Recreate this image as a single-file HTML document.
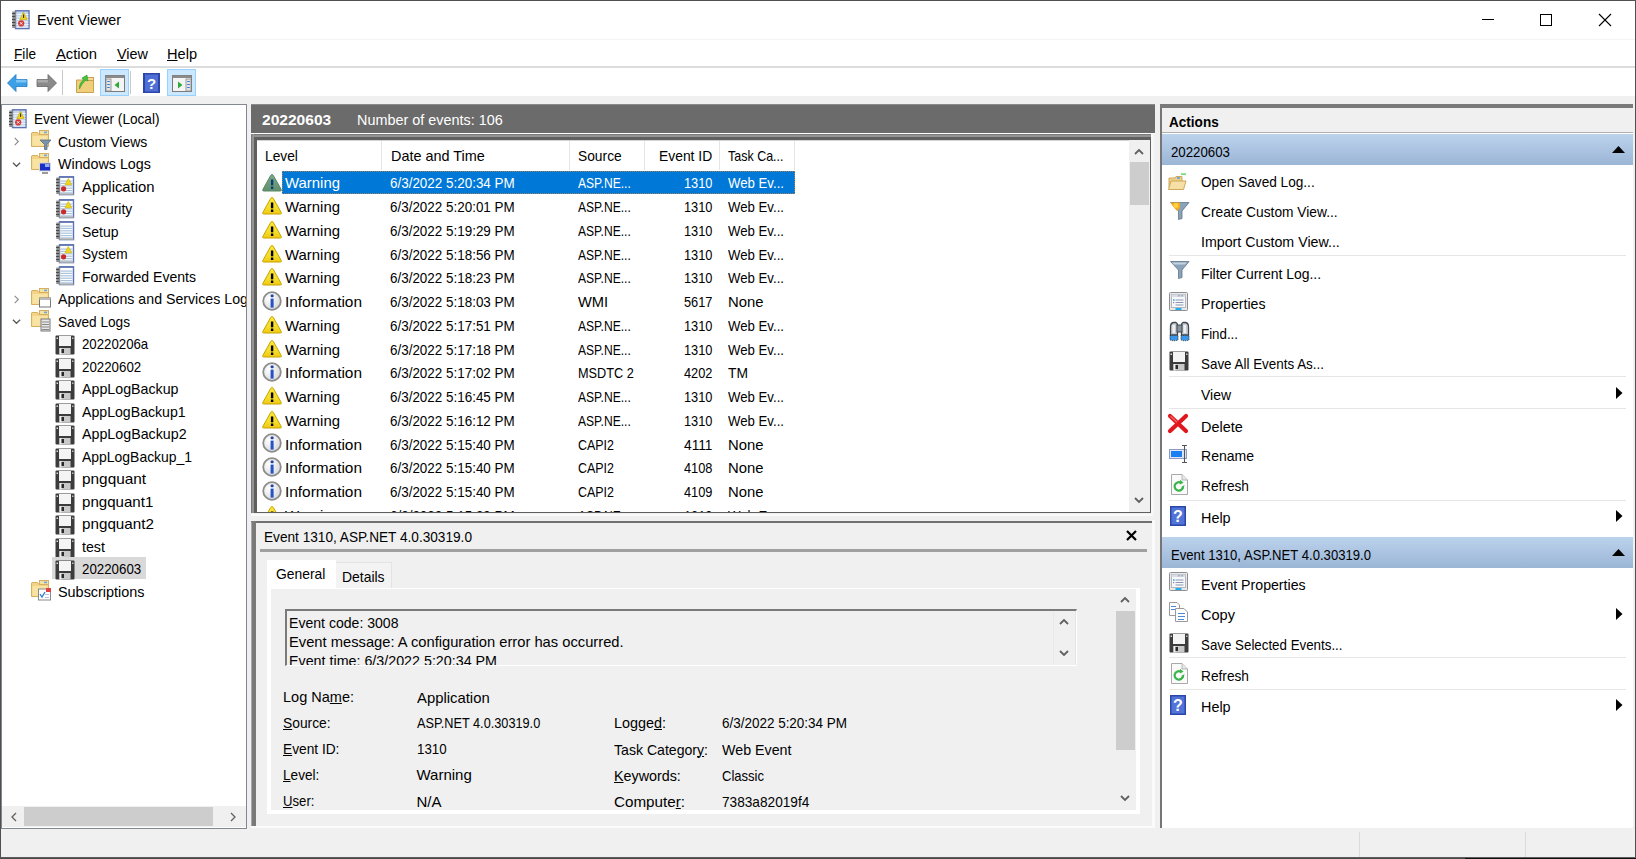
<!DOCTYPE html>
<html><head><meta charset="utf-8">
<style>
*{box-sizing:border-box;margin:0;padding:0}
html,body{width:1636px;height:859px;overflow:hidden;background:#f0f0f0;font-family:"Liberation Sans",sans-serif;font-size:14px;color:#000}
.a{position:absolute}
.t{position:absolute;white-space:nowrap}
u{text-decoration-thickness:1px;text-underline-offset:1px}
svg{overflow:visible}
</style></head><body>
<div class="a" style="left:0px;top:0px;width:1636px;height:859px;background:#f0f0f0;"></div>
<div class="a" style="left:0px;top:0px;width:1636px;height:96px;background:#ffffff;"></div>
<div class="a" style="left:0px;top:39px;width:1636px;height:1px;background:#f4f4f4;"></div>
<div class="a" style="left:0px;top:66px;width:1636px;height:2px;background:#dcdcdc;"></div>
<div class="a" style="left:0px;top:0px;width:1636px;height:1px;background:#505050;"></div>
<div class="a" style="left:0px;top:0px;width:1px;height:859px;background:#505050;"></div>
<div class="a" style="left:1635px;top:0px;width:1px;height:859px;background:#505050;"></div>
<div class="a" style="left:0px;top:857px;width:1636px;height:1px;background:#5c5c5c;"></div>
<div class="a" style="left:0px;top:858px;width:1465px;height:1px;background:#4a4a4a;"></div>
<div class="a" style="left:1465px;top:858px;width:171px;height:1px;background:#101010;"></div>
<div class="a" style="left:1359px;top:832px;width:1px;height:25px;background:#dadada;"></div>
<div class="a" style="left:1525px;top:832px;width:1px;height:25px;background:#dadada;"></div>
<div class="a" style="left:1160px;top:827px;width:474px;height:1px;background:#dcdcdc;"></div>
<svg class="a" style="left:12px;top:10px" width="18" height="19" viewBox="0 0 18 19"><rect x="3.5" y="0.8" width="13.5" height="17.8" fill="#c8d8ec" stroke="#5d72b4" stroke-width="1.4"/><rect x="4.5" y="4" width="12" height="1" fill="#eef4fb"/><rect x="4.5" y="6.5" width="12" height="1" fill="#eef4fb"/><rect x="4.5" y="9" width="12" height="1" fill="#eef4fb"/><rect x="4.5" y="11.5" width="12" height="1" fill="#eef4fb"/><rect x="4.5" y="14" width="12" height="1" fill="#eef4fb"/><rect x="4.5" y="16.5" width="12" height="1" fill="#eef4fb"/><rect x="0.3" y="1.5" width="3.6" height="16.5" fill="#8d8d8d"/><rect x="0" y="3" width="3.2" height="1" fill="#4a4a4a"/><rect x="0" y="6" width="3.2" height="1" fill="#4a4a4a"/><rect x="0" y="9" width="3.2" height="1" fill="#4a4a4a"/><rect x="0" y="12" width="3.2" height="1" fill="#4a4a4a"/><rect x="0" y="15" width="3.2" height="1" fill="#4a4a4a"/><path d="M11.5 2.2 L15.2 9.6 L7.8 9.6Z" fill="#f1d61c" stroke="#c9a800" stroke-width="0.7"/><rect x="11" y="4.5" width="1.1" height="3.5" fill="#333"/><circle cx="9.2" cy="13.4" r="3.1" fill="#d33a3a"/><path d="M8 12.2 L10.4 14.6 M10.4 12.2 L8 14.6" stroke="#fff" stroke-width="0.9"/></svg>
<div class="t" style="top:11.40px;font-size:15px;line-height:18px;color:#000;transform:scaleX(0.9534);transform-origin:0 0;left:37.00px;">Event Viewer</div>
<svg class="a" style="left:1482px;top:19px" width="12" height="1" viewBox="0 0 12 1"><rect x="0" y="0" width="12" height="1" fill="#000"/></svg>
<svg class="a" style="left:1540px;top:14px" width="12" height="12" viewBox="0 0 12 12"><rect x="0.5" y="0.5" width="11" height="11" fill="none" stroke="#000" stroke-width="1"/></svg>
<svg class="a" style="left:1599px;top:14px" width="12" height="12" viewBox="0 0 12 12"><path d="M0 0 L12 12 M12 0 L0 12" stroke="#000" stroke-width="1.1"/></svg>
<div class="t" style="top:44.60px;font-size:15px;line-height:18px;color:#000;transform:scaleX(0.9101);transform-origin:0 0;left:14.00px;"><u>F</u>ile</div>
<div class="t" style="top:44.60px;font-size:15px;line-height:18px;color:#000;transform:scaleX(0.9831);transform-origin:0 0;left:56.00px;"><u>A</u>ction</div>
<div class="t" style="top:44.60px;font-size:15px;line-height:18px;color:#000;transform:scaleX(0.9612);transform-origin:0 0;left:117.00px;"><u>V</u>iew</div>
<div class="t" style="top:44.60px;font-size:15px;line-height:18px;color:#000;transform:scaleX(0.9722);transform-origin:0 0;left:167.00px;"><u>H</u>elp</div>
<svg class="a" style="left:7px;top:73px" width="21" height="20" viewBox="0 0 21 20"><path d="M0.5 10 L9 1.5 L9 6.5 L20 6.5 L20 13.5 L9 13.5 L9 18.5Z" fill="#3d9fe6" stroke="#1f78c4" stroke-width="0.8"/><path d="M9 6.8 L19.5 6.8 L19.5 9.5 L9 9.5Z" fill="#7cc4f4"/></svg>
<svg class="a" style="left:36px;top:73px" width="21" height="20" viewBox="0 0 21 20"><path d="M20.5 10 L12 1.5 L12 6.5 L1 6.5 L1 13.5 L12 13.5 L12 18.5Z" fill="#8a8a8a" stroke="#666" stroke-width="0.8"/><path d="M1.5 6.8 L12 6.8 L12 9.5 L1.5 9.5Z" fill="#aaa"/></svg>
<div class="a" style="left:62px;top:70px;width:1px;height:25px;background:#c8c8c8;"></div>
<svg class="a" style="left:76px;top:74px" width="18" height="19" viewBox="0 0 18 19"><path d="M0.5 6 L0.5 18.5 L17.5 18.5 L17.5 6Z" fill="#f0cf7c" stroke="#c9a24e" stroke-width="1"/><rect x="8" y="3.5" width="9.5" height="3" fill="#f5dc9a" stroke="#c9a24e" stroke-width="1"/><path d="M3.5 15 Q3 9 7.5 6 L6 4 L11 1 L12 7 L10 6 Q6 9 3.5 15Z" fill="#46c040" stroke="#2f9a2f" stroke-width="0.6"/></svg>
<div class="a" style="left:100px;top:69px;width:29px;height:27px;background:#cce8ff;box-shadow:inset 0 0 0 1px #99d1ff"></div>
<svg class="a" style="left:105px;top:75px" width="20" height="17" viewBox="0 0 20 17"><rect x="0.5" y="0.5" width="19" height="16" fill="#f4f4f4" stroke="#7a7a7a" stroke-width="1"/><rect x="0.5" y="0.5" width="19" height="2.5" fill="#8a8a8a"/><rect x="1" y="4" width="5" height="12" fill="#e4e4e4" stroke="#8a8a8a" stroke-width="0.8"/><rect x="2.2" y="6" width="2.6" height="1" fill="#3a7bd5"/><rect x="2.2" y="9" width="2.6" height="1" fill="#3a7bd5"/><rect x="2.2" y="12" width="2.6" height="1" fill="#3a7bd5"/><path d="M14 6.5 L9.5 10 L14 13.5Z" fill="#2eaa3a"/></svg>
<div class="a" style="left:130px;top:71px;width:1px;height:23px;background:#c8c8c8;"></div>
<svg class="a" style="left:143px;top:73px" width="17" height="20" viewBox="0 0 17 20"><rect x="0" y="0" width="17" height="20" fill="#2b46a8"/><rect x="2" y="1.5" width="13" height="17" fill="#4f6fd6"/><text x="8.5" y="15.5" font-family="Liberation Sans" font-size="15" font-weight="bold" fill="#fff" text-anchor="middle">?</text></svg>
<div class="a" style="left:167px;top:69px;width:29px;height:27px;background:#cce8ff;box-shadow:inset 0 0 0 1px #99d1ff"></div>
<svg class="a" style="left:172px;top:75px" width="20" height="17" viewBox="0 0 20 17"><rect x="0.5" y="0.5" width="19" height="16" fill="#f4f4f4" stroke="#7a7a7a" stroke-width="1"/><rect x="0.5" y="0.5" width="19" height="2.5" fill="#8a8a8a"/><rect x="14" y="4" width="5" height="12" fill="#e4e4e4" stroke="#8a8a8a" stroke-width="0.8"/><rect x="15.2" y="6" width="2.6" height="1" fill="#3a7bd5"/><rect x="15.2" y="9" width="2.6" height="1" fill="#3a7bd5"/><rect x="15.2" y="12" width="2.6" height="1" fill="#3a7bd5"/><path d="M6 6.5 L10.5 10 L6 13.5Z" fill="#2eaa3a"/></svg>
<div class="a" style="left:1px;top:104px;width:246px;height:725px;background:#ffffff;border:1px solid #828790"></div>
<svg class="a" style="left:9px;top:109px" width="18" height="19" viewBox="0 0 18 19"><rect x="3.5" y="0.8" width="13.5" height="17.8" fill="#c8d8ec" stroke="#5d72b4" stroke-width="1.4"/><rect x="4.5" y="4" width="12" height="1" fill="#eef4fb"/><rect x="4.5" y="6.5" width="12" height="1" fill="#eef4fb"/><rect x="4.5" y="9" width="12" height="1" fill="#eef4fb"/><rect x="4.5" y="11.5" width="12" height="1" fill="#eef4fb"/><rect x="4.5" y="14" width="12" height="1" fill="#eef4fb"/><rect x="4.5" y="16.5" width="12" height="1" fill="#eef4fb"/><rect x="0.3" y="1.5" width="3.6" height="16.5" fill="#8d8d8d"/><rect x="0" y="3" width="3.2" height="1" fill="#4a4a4a"/><rect x="0" y="6" width="3.2" height="1" fill="#4a4a4a"/><rect x="0" y="9" width="3.2" height="1" fill="#4a4a4a"/><rect x="0" y="12" width="3.2" height="1" fill="#4a4a4a"/><rect x="0" y="15" width="3.2" height="1" fill="#4a4a4a"/><path d="M11.5 2.2 L15.2 9.6 L7.8 9.6Z" fill="#f1d61c" stroke="#c9a800" stroke-width="0.7"/><rect x="11" y="4.5" width="1.1" height="3.5" fill="#333"/><circle cx="9.2" cy="13.4" r="3.1" fill="#d33a3a"/><path d="M8 12.2 L10.4 14.6 M10.4 12.2 L8 14.6" stroke="#fff" stroke-width="0.9"/></svg>
<div class="t" style="top:110.30px;font-size:15px;line-height:18px;color:#000;transform:scaleX(0.9086);transform-origin:0 0;left:34.00px;">Event Viewer (Local)</div>
<svg class="a" style="left:31px;top:130px" width="21" height="22" viewBox="0 0 21 22"><path d="M0.5 3 L0.5 16.5 L17.5 16.5 L17.5 4.5 L8 4.5 L6.5 2.5 L1 2.5Z" fill="#f3d486" stroke="#d4b062" stroke-width="1"/><rect x="8.5" y="0.5" width="9" height="4" fill="#f7e2a4" stroke="#d4b062" stroke-width="1"/><rect x="13" y="1.6" width="3" height="1.6" fill="#6aa9e0"/><rect x="1.5" y="6" width="15" height="9.8" fill="#f9e3a2"/><path d="M9 10 L20 10 L16 14.5 L16 19.5 L13.5 19.5 L13.5 14.5Z" fill="#7b93a8" stroke="#566f85" stroke-width="0.8"/></svg>
<svg class="a" style="left:12px;top:137px" width="9" height="9" viewBox="0 0 9 9"><path d="M2.6999999999999997 0.9 L6.3 4.5 L2.6999999999999997 8.1" fill="none" stroke="#8a8a8a" stroke-width="1.1"/></svg>
<div class="t" style="top:132.80px;font-size:15px;line-height:18px;color:#000;transform:scaleX(0.9342);transform-origin:0 0;left:57.50px;">Custom Views</div>
<svg class="a" style="left:31px;top:153px" width="21" height="22" viewBox="0 0 21 22"><path d="M0.5 3 L0.5 16.5 L17.5 16.5 L17.5 4.5 L8 4.5 L6.5 2.5 L1 2.5Z" fill="#f3d486" stroke="#d4b062" stroke-width="1"/><rect x="8.5" y="0.5" width="9" height="4" fill="#f7e2a4" stroke="#d4b062" stroke-width="1"/><rect x="13" y="1.6" width="3" height="1.6" fill="#6aa9e0"/><rect x="1.5" y="6" width="15" height="9.8" fill="#f9e3a2"/><rect x="8" y="9.5" width="12" height="9" fill="#d8d8d8"/><rect x="9" y="10.5" width="10" height="7" fill="#1a2fc8"/><rect x="14" y="11" width="4.5" height="3" fill="#8fb0ee"/><rect x="11" y="19" width="6" height="2" fill="#9a9a9a"/></svg>
<svg class="a" style="left:12px;top:160px" width="9" height="9" viewBox="0 0 9 9"><path d="M0.9 2.6999999999999997 L4.5 6.3 L8.1 2.6999999999999997" fill="none" stroke="#5a5a5a" stroke-width="1.3"/></svg>
<div class="t" style="top:155.30px;font-size:15px;line-height:18px;color:#000;transform:scaleX(0.9524);transform-origin:0 0;left:57.50px;">Windows Logs</div>
<svg class="a" style="left:56px;top:176px" width="18" height="19" viewBox="0 0 18 19"><rect x="3.5" y="0.8" width="14" height="17.8" fill="#fff" stroke="#5d72b4" stroke-width="1.4"/><rect x="3.5" y="0.2" width="14" height="1.6" fill="#6275b4"/><rect x="4.5" y="4.5" width="12" height="1.2" fill="#a9c3dc"/><rect x="4.5" y="6.8" width="12" height="1.2" fill="#a9c3dc"/><rect x="4.5" y="9.2" width="12" height="1.2" fill="#a9c3dc"/><rect x="4.5" y="11.6" width="12" height="1.2" fill="#a9c3dc"/><rect x="4.5" y="14" width="12" height="1.2" fill="#a9c3dc"/><rect x="4.5" y="16.3" width="12" height="1.2" fill="#a9c3dc"/><rect x="0.3" y="1.5" width="3.6" height="16.5" fill="#8d8d8d"/><rect x="0" y="3" width="3.2" height="1" fill="#4a4a4a"/><rect x="0" y="6" width="3.2" height="1" fill="#4a4a4a"/><rect x="0" y="9" width="3.2" height="1" fill="#4a4a4a"/><rect x="0" y="12" width="3.2" height="1" fill="#4a4a4a"/><rect x="0" y="15" width="3.2" height="1" fill="#4a4a4a"/><rect x="3.5" y="17.5" width="14" height="1.5" fill="#a8a8a8"/><path d="M12.3 2.5 L15.6 8.8 L9 8.8Z" fill="#f1d61c" stroke="#d7b800" stroke-width="0.7"/><circle cx="7.6" cy="12.8" r="2.6" fill="#cc2a2a"/></svg>
<div class="t" style="top:177.80px;font-size:15px;line-height:18px;color:#000;transform:scaleX(0.9879);transform-origin:0 0;left:81.50px;">Application</div>
<svg class="a" style="left:56px;top:199px" width="18" height="19" viewBox="0 0 18 19"><rect x="3.5" y="0.8" width="14" height="17.8" fill="#fff" stroke="#5d72b4" stroke-width="1.4"/><rect x="3.5" y="0.2" width="14" height="1.6" fill="#6275b4"/><rect x="4.5" y="4.5" width="12" height="1.2" fill="#a9c3dc"/><rect x="4.5" y="6.8" width="12" height="1.2" fill="#a9c3dc"/><rect x="4.5" y="9.2" width="12" height="1.2" fill="#a9c3dc"/><rect x="4.5" y="11.6" width="12" height="1.2" fill="#a9c3dc"/><rect x="4.5" y="14" width="12" height="1.2" fill="#a9c3dc"/><rect x="4.5" y="16.3" width="12" height="1.2" fill="#a9c3dc"/><rect x="0.3" y="1.5" width="3.6" height="16.5" fill="#8d8d8d"/><rect x="0" y="3" width="3.2" height="1" fill="#4a4a4a"/><rect x="0" y="6" width="3.2" height="1" fill="#4a4a4a"/><rect x="0" y="9" width="3.2" height="1" fill="#4a4a4a"/><rect x="0" y="12" width="3.2" height="1" fill="#4a4a4a"/><rect x="0" y="15" width="3.2" height="1" fill="#4a4a4a"/><rect x="3.5" y="17.5" width="14" height="1.5" fill="#a8a8a8"/><path d="M12.3 2.5 L15.6 8.8 L9 8.8Z" fill="#f1d61c" stroke="#d7b800" stroke-width="0.7"/><circle cx="7.6" cy="12.8" r="2.6" fill="#cc2a2a"/></svg>
<div class="t" style="top:200.30px;font-size:15px;line-height:18px;color:#000;transform:scaleX(0.9264);transform-origin:0 0;left:81.50px;">Security</div>
<svg class="a" style="left:56px;top:221px" width="18" height="19" viewBox="0 0 18 19"><rect x="3.5" y="0.8" width="14" height="17.8" fill="#fff" stroke="#5d72b4" stroke-width="1.4"/><rect x="3.5" y="0.2" width="14" height="1.6" fill="#6275b4"/><rect x="4.5" y="4.5" width="12" height="1.2" fill="#a9c3dc"/><rect x="4.5" y="6.8" width="12" height="1.2" fill="#a9c3dc"/><rect x="4.5" y="9.2" width="12" height="1.2" fill="#a9c3dc"/><rect x="4.5" y="11.6" width="12" height="1.2" fill="#a9c3dc"/><rect x="4.5" y="14" width="12" height="1.2" fill="#a9c3dc"/><rect x="4.5" y="16.3" width="12" height="1.2" fill="#a9c3dc"/><rect x="0.3" y="1.5" width="3.6" height="16.5" fill="#8d8d8d"/><rect x="0" y="3" width="3.2" height="1" fill="#4a4a4a"/><rect x="0" y="6" width="3.2" height="1" fill="#4a4a4a"/><rect x="0" y="9" width="3.2" height="1" fill="#4a4a4a"/><rect x="0" y="12" width="3.2" height="1" fill="#4a4a4a"/><rect x="0" y="15" width="3.2" height="1" fill="#4a4a4a"/><rect x="3.5" y="17.5" width="14" height="1.5" fill="#a8a8a8"/></svg>
<div class="t" style="top:222.80px;font-size:15px;line-height:18px;color:#000;transform:scaleX(0.9310);transform-origin:0 0;left:81.50px;">Setup</div>
<svg class="a" style="left:56px;top:244px" width="18" height="19" viewBox="0 0 18 19"><rect x="3.5" y="0.8" width="14" height="17.8" fill="#fff" stroke="#5d72b4" stroke-width="1.4"/><rect x="3.5" y="0.2" width="14" height="1.6" fill="#6275b4"/><rect x="4.5" y="4.5" width="12" height="1.2" fill="#a9c3dc"/><rect x="4.5" y="6.8" width="12" height="1.2" fill="#a9c3dc"/><rect x="4.5" y="9.2" width="12" height="1.2" fill="#a9c3dc"/><rect x="4.5" y="11.6" width="12" height="1.2" fill="#a9c3dc"/><rect x="4.5" y="14" width="12" height="1.2" fill="#a9c3dc"/><rect x="4.5" y="16.3" width="12" height="1.2" fill="#a9c3dc"/><rect x="0.3" y="1.5" width="3.6" height="16.5" fill="#8d8d8d"/><rect x="0" y="3" width="3.2" height="1" fill="#4a4a4a"/><rect x="0" y="6" width="3.2" height="1" fill="#4a4a4a"/><rect x="0" y="9" width="3.2" height="1" fill="#4a4a4a"/><rect x="0" y="12" width="3.2" height="1" fill="#4a4a4a"/><rect x="0" y="15" width="3.2" height="1" fill="#4a4a4a"/><rect x="3.5" y="17.5" width="14" height="1.5" fill="#a8a8a8"/><path d="M12.3 2.5 L15.6 8.8 L9 8.8Z" fill="#f1d61c" stroke="#d7b800" stroke-width="0.7"/><circle cx="7.6" cy="12.8" r="2.6" fill="#cc2a2a"/></svg>
<div class="t" style="top:245.30px;font-size:15px;line-height:18px;color:#000;transform:scaleX(0.9097);transform-origin:0 0;left:81.50px;">System</div>
<svg class="a" style="left:56px;top:266px" width="18" height="19" viewBox="0 0 18 19"><rect x="3.5" y="0.8" width="14" height="17.8" fill="#fff" stroke="#5d72b4" stroke-width="1.4"/><rect x="3.5" y="0.2" width="14" height="1.6" fill="#6275b4"/><rect x="4.5" y="4.5" width="12" height="1.2" fill="#a9c3dc"/><rect x="4.5" y="6.8" width="12" height="1.2" fill="#a9c3dc"/><rect x="4.5" y="9.2" width="12" height="1.2" fill="#a9c3dc"/><rect x="4.5" y="11.6" width="12" height="1.2" fill="#a9c3dc"/><rect x="4.5" y="14" width="12" height="1.2" fill="#a9c3dc"/><rect x="4.5" y="16.3" width="12" height="1.2" fill="#a9c3dc"/><rect x="0.3" y="1.5" width="3.6" height="16.5" fill="#8d8d8d"/><rect x="0" y="3" width="3.2" height="1" fill="#4a4a4a"/><rect x="0" y="6" width="3.2" height="1" fill="#4a4a4a"/><rect x="0" y="9" width="3.2" height="1" fill="#4a4a4a"/><rect x="0" y="12" width="3.2" height="1" fill="#4a4a4a"/><rect x="0" y="15" width="3.2" height="1" fill="#4a4a4a"/><rect x="3.5" y="17.5" width="14" height="1.5" fill="#a8a8a8"/></svg>
<div class="t" style="top:267.80px;font-size:15px;line-height:18px;color:#000;transform:scaleX(0.9365);transform-origin:0 0;left:81.50px;">Forwarded Events</div>
<svg class="a" style="left:31px;top:288px" width="21" height="22" viewBox="0 0 21 22"><path d="M0.5 3 L0.5 16.5 L17.5 16.5 L17.5 4.5 L8 4.5 L6.5 2.5 L1 2.5Z" fill="#f3d486" stroke="#d4b062" stroke-width="1"/><rect x="8.5" y="0.5" width="9" height="4" fill="#f7e2a4" stroke="#d4b062" stroke-width="1"/><rect x="13" y="1.6" width="3" height="1.6" fill="#6aa9e0"/><rect x="1.5" y="6" width="15" height="9.8" fill="#f9e3a2"/><rect x="8.5" y="10" width="11" height="9" fill="#fff" stroke="#777" stroke-width="1"/><rect x="8.5" y="10" width="11" height="2" fill="#bbb"/></svg>
<svg class="a" style="left:12px;top:295px" width="9" height="9" viewBox="0 0 9 9"><path d="M2.6999999999999997 0.9 L6.3 4.5 L2.6999999999999997 8.1" fill="none" stroke="#8a8a8a" stroke-width="1.1"/></svg>
<div class="t" style="top:290.30px;font-size:15px;line-height:18px;color:#000;transform:scaleX(0.9450);transform-origin:0 0;left:57.50px;">Applications and Services Logs</div>
<svg class="a" style="left:31px;top:310px" width="21" height="22" viewBox="0 0 21 22"><path d="M0.5 3 L0.5 16.5 L17.5 16.5 L17.5 4.5 L8 4.5 L6.5 2.5 L1 2.5Z" fill="#f3d486" stroke="#d4b062" stroke-width="1"/><rect x="8.5" y="0.5" width="9" height="4" fill="#f7e2a4" stroke="#d4b062" stroke-width="1"/><rect x="13" y="1.6" width="3" height="1.6" fill="#6aa9e0"/><rect x="1.5" y="6" width="15" height="9.8" fill="#f9e3a2"/><rect x="10" y="9" width="9" height="12" fill="#e8e8e8" stroke="#777" stroke-width="1"/><rect x="11" y="11.5" width="7" height="1" fill="#888"/><rect x="11" y="14" width="7" height="1" fill="#888"/><rect x="11" y="16.5" width="7" height="1" fill="#888"/><rect x="11" y="19" width="7" height="1" fill="#888"/></svg>
<svg class="a" style="left:12px;top:317px" width="9" height="9" viewBox="0 0 9 9"><path d="M0.9 2.6999999999999997 L4.5 6.3 L8.1 2.6999999999999997" fill="none" stroke="#5a5a5a" stroke-width="1.3"/></svg>
<div class="t" style="top:312.80px;font-size:15px;line-height:18px;color:#000;transform:scaleX(0.9087);transform-origin:0 0;left:57.50px;">Saved Logs</div>
<svg class="a" style="left:55px;top:335px" width="20" height="20" viewBox="0 0 20 20"><path d="M0.5 1.5 Q0.5 0.5 1.5 0.5 L18.5 0.5 Q19.5 0.5 19.5 1.5 L19.5 18.5 Q19.5 19.5 18.5 19.5 L1.5 19.5 Q0.5 19.5 0.5 18.5Z" fill="#3c3c3c"/><rect x="4" y="1" width="12" height="10" fill="#f4f4f4"/><rect x="4.5" y="13" width="11" height="6.5" fill="#c8c8c8"/><rect x="4.5" y="13" width="2" height="6.5" fill="#eee"/><rect x="6.5" y="14" width="2.5" height="4" fill="#2a2a2a"/><rect x="1.5" y="2.5" width="1.5" height="1.5" fill="#ddd"/><rect x="17" y="2.5" width="1.5" height="1.5" fill="#bbb"/></svg>
<div class="t" style="top:335.30px;font-size:15px;line-height:18px;color:#000;transform:scaleX(0.8816);transform-origin:0 0;left:81.50px;">20220206a</div>
<svg class="a" style="left:55px;top:358px" width="20" height="20" viewBox="0 0 20 20"><path d="M0.5 1.5 Q0.5 0.5 1.5 0.5 L18.5 0.5 Q19.5 0.5 19.5 1.5 L19.5 18.5 Q19.5 19.5 18.5 19.5 L1.5 19.5 Q0.5 19.5 0.5 18.5Z" fill="#3c3c3c"/><rect x="4" y="1" width="12" height="10" fill="#f4f4f4"/><rect x="4.5" y="13" width="11" height="6.5" fill="#c8c8c8"/><rect x="4.5" y="13" width="2" height="6.5" fill="#eee"/><rect x="6.5" y="14" width="2.5" height="4" fill="#2a2a2a"/><rect x="1.5" y="2.5" width="1.5" height="1.5" fill="#ddd"/><rect x="17" y="2.5" width="1.5" height="1.5" fill="#bbb"/></svg>
<div class="t" style="top:357.80px;font-size:15px;line-height:18px;color:#000;transform:scaleX(0.8869);transform-origin:0 0;left:81.50px;">20220602</div>
<svg class="a" style="left:55px;top:380px" width="20" height="20" viewBox="0 0 20 20"><path d="M0.5 1.5 Q0.5 0.5 1.5 0.5 L18.5 0.5 Q19.5 0.5 19.5 1.5 L19.5 18.5 Q19.5 19.5 18.5 19.5 L1.5 19.5 Q0.5 19.5 0.5 18.5Z" fill="#3c3c3c"/><rect x="4" y="1" width="12" height="10" fill="#f4f4f4"/><rect x="4.5" y="13" width="11" height="6.5" fill="#c8c8c8"/><rect x="4.5" y="13" width="2" height="6.5" fill="#eee"/><rect x="6.5" y="14" width="2.5" height="4" fill="#2a2a2a"/><rect x="1.5" y="2.5" width="1.5" height="1.5" fill="#ddd"/><rect x="17" y="2.5" width="1.5" height="1.5" fill="#bbb"/></svg>
<div class="t" style="top:380.30px;font-size:15px;line-height:18px;color:#000;transform:scaleX(0.9484);transform-origin:0 0;left:81.50px;">AppLogBackup</div>
<svg class="a" style="left:55px;top:403px" width="20" height="20" viewBox="0 0 20 20"><path d="M0.5 1.5 Q0.5 0.5 1.5 0.5 L18.5 0.5 Q19.5 0.5 19.5 1.5 L19.5 18.5 Q19.5 19.5 18.5 19.5 L1.5 19.5 Q0.5 19.5 0.5 18.5Z" fill="#3c3c3c"/><rect x="4" y="1" width="12" height="10" fill="#f4f4f4"/><rect x="4.5" y="13" width="11" height="6.5" fill="#c8c8c8"/><rect x="4.5" y="13" width="2" height="6.5" fill="#eee"/><rect x="6.5" y="14" width="2.5" height="4" fill="#2a2a2a"/><rect x="1.5" y="2.5" width="1.5" height="1.5" fill="#ddd"/><rect x="17" y="2.5" width="1.5" height="1.5" fill="#bbb"/></svg>
<div class="t" style="top:402.80px;font-size:15px;line-height:18px;color:#000;transform:scaleX(0.9419);transform-origin:0 0;left:81.50px;">AppLogBackup1</div>
<svg class="a" style="left:55px;top:425px" width="20" height="20" viewBox="0 0 20 20"><path d="M0.5 1.5 Q0.5 0.5 1.5 0.5 L18.5 0.5 Q19.5 0.5 19.5 1.5 L19.5 18.5 Q19.5 19.5 18.5 19.5 L1.5 19.5 Q0.5 19.5 0.5 18.5Z" fill="#3c3c3c"/><rect x="4" y="1" width="12" height="10" fill="#f4f4f4"/><rect x="4.5" y="13" width="11" height="6.5" fill="#c8c8c8"/><rect x="4.5" y="13" width="2" height="6.5" fill="#eee"/><rect x="6.5" y="14" width="2.5" height="4" fill="#2a2a2a"/><rect x="1.5" y="2.5" width="1.5" height="1.5" fill="#ddd"/><rect x="17" y="2.5" width="1.5" height="1.5" fill="#bbb"/></svg>
<div class="t" style="top:425.30px;font-size:15px;line-height:18px;color:#000;transform:scaleX(0.9501);transform-origin:0 0;left:81.50px;">AppLogBackup2</div>
<svg class="a" style="left:55px;top:448px" width="20" height="20" viewBox="0 0 20 20"><path d="M0.5 1.5 Q0.5 0.5 1.5 0.5 L18.5 0.5 Q19.5 0.5 19.5 1.5 L19.5 18.5 Q19.5 19.5 18.5 19.5 L1.5 19.5 Q0.5 19.5 0.5 18.5Z" fill="#3c3c3c"/><rect x="4" y="1" width="12" height="10" fill="#f4f4f4"/><rect x="4.5" y="13" width="11" height="6.5" fill="#c8c8c8"/><rect x="4.5" y="13" width="2" height="6.5" fill="#eee"/><rect x="6.5" y="14" width="2.5" height="4" fill="#2a2a2a"/><rect x="1.5" y="2.5" width="1.5" height="1.5" fill="#ddd"/><rect x="17" y="2.5" width="1.5" height="1.5" fill="#bbb"/></svg>
<div class="t" style="top:447.80px;font-size:15px;line-height:18px;color:#000;transform:scaleX(0.9296);transform-origin:0 0;left:81.50px;">AppLogBackup_1</div>
<svg class="a" style="left:55px;top:470px" width="20" height="20" viewBox="0 0 20 20"><path d="M0.5 1.5 Q0.5 0.5 1.5 0.5 L18.5 0.5 Q19.5 0.5 19.5 1.5 L19.5 18.5 Q19.5 19.5 18.5 19.5 L1.5 19.5 Q0.5 19.5 0.5 18.5Z" fill="#3c3c3c"/><rect x="4" y="1" width="12" height="10" fill="#f4f4f4"/><rect x="4.5" y="13" width="11" height="6.5" fill="#c8c8c8"/><rect x="4.5" y="13" width="2" height="6.5" fill="#eee"/><rect x="6.5" y="14" width="2.5" height="4" fill="#2a2a2a"/><rect x="1.5" y="2.5" width="1.5" height="1.5" fill="#ddd"/><rect x="17" y="2.5" width="1.5" height="1.5" fill="#bbb"/></svg>
<div class="t" style="top:470.30px;font-size:15px;line-height:18px;color:#000;transform:scaleX(1.0243);transform-origin:0 0;left:81.50px;">pngquant</div>
<svg class="a" style="left:55px;top:493px" width="20" height="20" viewBox="0 0 20 20"><path d="M0.5 1.5 Q0.5 0.5 1.5 0.5 L18.5 0.5 Q19.5 0.5 19.5 1.5 L19.5 18.5 Q19.5 19.5 18.5 19.5 L1.5 19.5 Q0.5 19.5 0.5 18.5Z" fill="#3c3c3c"/><rect x="4" y="1" width="12" height="10" fill="#f4f4f4"/><rect x="4.5" y="13" width="11" height="6.5" fill="#c8c8c8"/><rect x="4.5" y="13" width="2" height="6.5" fill="#eee"/><rect x="6.5" y="14" width="2.5" height="4" fill="#2a2a2a"/><rect x="1.5" y="2.5" width="1.5" height="1.5" fill="#ddd"/><rect x="17" y="2.5" width="1.5" height="1.5" fill="#bbb"/></svg>
<div class="t" style="top:492.80px;font-size:15px;line-height:18px;color:#000;transform:scaleX(1.0056);transform-origin:0 0;left:81.50px;">pngquant1</div>
<svg class="a" style="left:55px;top:515px" width="20" height="20" viewBox="0 0 20 20"><path d="M0.5 1.5 Q0.5 0.5 1.5 0.5 L18.5 0.5 Q19.5 0.5 19.5 1.5 L19.5 18.5 Q19.5 19.5 18.5 19.5 L1.5 19.5 Q0.5 19.5 0.5 18.5Z" fill="#3c3c3c"/><rect x="4" y="1" width="12" height="10" fill="#f4f4f4"/><rect x="4.5" y="13" width="11" height="6.5" fill="#c8c8c8"/><rect x="4.5" y="13" width="2" height="6.5" fill="#eee"/><rect x="6.5" y="14" width="2.5" height="4" fill="#2a2a2a"/><rect x="1.5" y="2.5" width="1.5" height="1.5" fill="#ddd"/><rect x="17" y="2.5" width="1.5" height="1.5" fill="#bbb"/></svg>
<div class="t" style="top:515.30px;font-size:15px;line-height:18px;color:#000;transform:scaleX(1.0140);transform-origin:0 0;left:81.50px;">pngquant2</div>
<svg class="a" style="left:55px;top:538px" width="20" height="20" viewBox="0 0 20 20"><path d="M0.5 1.5 Q0.5 0.5 1.5 0.5 L18.5 0.5 Q19.5 0.5 19.5 1.5 L19.5 18.5 Q19.5 19.5 18.5 19.5 L1.5 19.5 Q0.5 19.5 0.5 18.5Z" fill="#3c3c3c"/><rect x="4" y="1" width="12" height="10" fill="#f4f4f4"/><rect x="4.5" y="13" width="11" height="6.5" fill="#c8c8c8"/><rect x="4.5" y="13" width="2" height="6.5" fill="#eee"/><rect x="6.5" y="14" width="2.5" height="4" fill="#2a2a2a"/><rect x="1.5" y="2.5" width="1.5" height="1.5" fill="#ddd"/><rect x="17" y="2.5" width="1.5" height="1.5" fill="#bbb"/></svg>
<div class="t" style="top:537.80px;font-size:15px;line-height:18px;color:#000;transform:scaleX(0.9468);transform-origin:0 0;left:81.50px;">test</div>
<div class="a" style="left:52px;top:557px;width:94px;height:22px;background:#d9d9d9;"></div>
<svg class="a" style="left:55px;top:560px" width="20" height="20" viewBox="0 0 20 20"><path d="M0.5 1.5 Q0.5 0.5 1.5 0.5 L18.5 0.5 Q19.5 0.5 19.5 1.5 L19.5 18.5 Q19.5 19.5 18.5 19.5 L1.5 19.5 Q0.5 19.5 0.5 18.5Z" fill="#3c3c3c"/><rect x="4" y="1" width="12" height="10" fill="#f4f4f4"/><rect x="4.5" y="13" width="11" height="6.5" fill="#c8c8c8"/><rect x="4.5" y="13" width="2" height="6.5" fill="#eee"/><rect x="6.5" y="14" width="2.5" height="4" fill="#2a2a2a"/><rect x="1.5" y="2.5" width="1.5" height="1.5" fill="#ddd"/><rect x="17" y="2.5" width="1.5" height="1.5" fill="#bbb"/></svg>
<div class="t" style="top:560.30px;font-size:15px;line-height:18px;color:#000;transform:scaleX(0.8869);transform-origin:0 0;left:81.50px;">20220603</div>
<svg class="a" style="left:31px;top:580px" width="21" height="22" viewBox="0 0 21 22"><path d="M0.5 3 L0.5 16.5 L17.5 16.5 L17.5 4.5 L8 4.5 L6.5 2.5 L1 2.5Z" fill="#f3d486" stroke="#d4b062" stroke-width="1"/><rect x="8.5" y="0.5" width="9" height="4" fill="#f7e2a4" stroke="#d4b062" stroke-width="1"/><rect x="13" y="1.6" width="3" height="1.6" fill="#6aa9e0"/><rect x="1.5" y="6" width="15" height="9.8" fill="#f9e3a2"/><rect x="7.5" y="9" width="12" height="11" fill="#fff" stroke="#8a8a8a" stroke-width="1"/><rect x="15" y="8" width="5" height="4" fill="#e04040"/><path d="M9 14 L11 17 L14 12" stroke="#2a7ad0" stroke-width="1.3" fill="none"/><rect x="14.5" y="14" width="1" height="1" fill="#6b8ab8"/><rect x="16.5" y="14" width="1" height="1" fill="#6b8ab8"/><rect x="14.5" y="17" width="1" height="1" fill="#6b8ab8"/><rect x="16.5" y="17" width="1" height="1" fill="#6b8ab8"/></svg>
<div class="t" style="top:582.80px;font-size:15px;line-height:18px;color:#000;transform:scaleX(0.9606);transform-origin:0 0;left:57.50px;">Subscriptions</div>
<div class="a" style="left:247px;top:104px;width:4px;height:725px;background:#f0f0f0;"></div>
<div class="a" style="left:246px;top:104px;width:1px;height:725px;background:#828790;"></div>
<div class="a" style="left:2px;top:806px;width:244px;height:21px;background:#f0f0f0;"></div>
<div class="a" style="left:24px;top:807px;width:189px;height:19px;background:#cdcdcd;"></div>
<svg class="a" style="left:9px;top:812px" width="10" height="10" viewBox="0 0 10 10"><path d="M7.0 1.0 L3.0 5.0 L7.0 9.0" fill="none" stroke="#606060" stroke-width="1.3"/></svg>
<svg class="a" style="left:228px;top:812px" width="10" height="10" viewBox="0 0 10 10"><path d="M3.0 1.0 L7.0 5.0 L3.0 9.0" fill="none" stroke="#606060" stroke-width="1.3"/></svg>
<div class="a" style="left:251px;top:104px;width:904px;height:29px;background:#6b6b6b;border-top:1px solid #8a8a8a"></div>
<div class="t" style="top:111.40px;font-size:15px;line-height:18px;color:#fff;font-weight:bold;transform:scaleX(1.0367);transform-origin:0 0;left:262.00px;">20220603</div>
<div class="t" style="top:111.40px;font-size:15px;line-height:18px;color:#fff;transform:scaleX(0.9600);transform-origin:0 0;left:356.60px;">Number of events: 106</div>
<div class="a" style="left:251px;top:133px;width:904px;height:1px;background:#ffffff;"></div>
<div class="a" style="left:251px;top:134px;width:902px;height:380px;background:#f0f0f0;"></div>
<div class="a" style="left:251px;top:134px;width:902px;height:3px;background:#949494;"></div>
<div class="a" style="left:251px;top:134px;width:902px;height:1px;background:#7a7a7a;"></div>
<div class="a" style="left:251px;top:134px;width:3px;height:379px;background:#949494;"></div>
<div class="a" style="left:251px;top:134px;width:1px;height:379px;background:#7a7a7a;"></div>
<div class="a" style="left:254px;top:137px;width:897px;height:376px;background:#ffffff;border:3px solid #606060;border-right-width:1px;border-bottom-width:1px"></div>
<div class="a" style="left:1151px;top:134px;width:3px;height:380px;background:#f7f7f7;"></div>
<div class="a" style="left:381px;top:140px;width:1px;height:30px;background:#e5e5e5;"></div>
<div class="a" style="left:569px;top:140px;width:1px;height:30px;background:#e5e5e5;"></div>
<div class="a" style="left:644px;top:140px;width:1px;height:30px;background:#e5e5e5;"></div>
<div class="a" style="left:719px;top:140px;width:1px;height:30px;background:#e5e5e5;"></div>
<div class="a" style="left:794px;top:140px;width:1px;height:30px;background:#e5e5e5;"></div>
<div class="a" style="left:257px;top:140px;width:872px;height:1px;background:#d4d4d4;"></div>
<div class="t" style="top:147.10px;font-size:15px;line-height:18px;color:#000;transform:scaleX(0.9175);transform-origin:0 0;left:265.00px;">Level</div>
<div class="t" style="top:147.10px;font-size:15px;line-height:18px;color:#000;transform:scaleX(0.9614);transform-origin:0 0;left:390.50px;">Date and Time</div>
<div class="t" style="top:147.10px;font-size:15px;line-height:18px;color:#000;transform:scaleX(0.9194);transform-origin:0 0;left:577.60px;">Source</div>
<div class="t" style="top:147.10px;font-size:15px;line-height:18px;color:#000;transform:scaleX(0.9247);transform-origin:0 0;left:659.30px;">Event ID</div>
<div class="t" style="top:147.10px;font-size:15px;line-height:18px;color:#000;transform:scaleX(0.8322);transform-origin:0 0;left:728.00px;">Task Ca...</div>
<div class="a" style="left:256px;top:139px;width:873px;height:373px;overflow:hidden">
<div class="a" style="left:26px;top:32px;width:513px;height:23px;background:#0078d7;outline:1px dotted #a08060;outline-offset:-1px"></div>
<svg class="a" style="left:6px;top:34px" width="20" height="19" viewBox="0 0 20 19"><defs><linearGradient id="wgs" x1="0" y1="0" x2="0" y2="1"><stop offset="0" stop-color="#7fa98a"/><stop offset="1" stop-color="#5f8f6c"/></linearGradient></defs><path d="M10 1.5 Q10.8 1.5 11.4 2.6 L19.3 16.6 Q19.8 18 18.3 18 L1.7 18 Q0.2 18 0.8 16.6 L8.6 2.6 Q9.2 1.5 10 1.5Z" fill="url(#wgs)" stroke="#5a8868" stroke-width="1"/><rect x="8.9" y="6.5" width="2.4" height="5.8" fill="#0b3a78"/><rect x="8.9" y="13.5" width="2.4" height="2.5" fill="#0b3a78"/></svg>
<div class="t" style="top:35.30px;font-size:15px;line-height:18px;color:#fff;transform:scaleX(0.9944);transform-origin:0 0;left:29.00px;">Warning</div>
<div class="t" style="top:35.30px;font-size:15px;line-height:18px;color:#fff;transform:scaleX(0.8953);transform-origin:0 0;left:134.00px;">6/3/2022 5:20:34 PM</div>
<div class="t" style="top:35.30px;font-size:15px;line-height:18px;color:#fff;transform:scaleX(0.8050);transform-origin:0 0;left:321.60px;">ASP.NE...</div>
<div class="t" style="top:35.30px;font-size:15px;line-height:18px;color:#fff;transform:scaleX(0.8539);transform-origin:0 0;left:428.00px;">1310</div>
<div class="t" style="top:35.30px;font-size:15px;line-height:18px;color:#fff;transform:scaleX(0.8799);transform-origin:0 0;left:472.00px;">Web Ev...</div>
<svg class="a" style="left:6px;top:57px" width="20" height="19" viewBox="0 0 20 19"><defs><linearGradient id="wgy" x1="0" y1="0" x2="0" y2="1"><stop offset="0" stop-color="#f7e63a"/><stop offset="0.6" stop-color="#f5df2c"/><stop offset="1" stop-color="#efc814"/></linearGradient></defs><path d="M10 1.5 Q10.8 1.5 11.4 2.6 L19.3 16.6 Q19.8 18 18.3 18 L1.7 18 Q0.2 18 0.8 16.6 L8.6 2.6 Q9.2 1.5 10 1.5Z" fill="url(#wgy)" stroke="#c9a400" stroke-width="1"/><rect x="8.9" y="6.5" width="2.4" height="5.8" fill="#000"/><rect x="8.9" y="13.5" width="2.4" height="2.5" fill="#000"/></svg>
<div class="t" style="top:59.05px;font-size:15px;line-height:18px;color:#000;transform:scaleX(0.9944);transform-origin:0 0;left:29.00px;">Warning</div>
<div class="t" style="top:59.05px;font-size:15px;line-height:18px;color:#000;transform:scaleX(0.8953);transform-origin:0 0;left:134.00px;">6/3/2022 5:20:01 PM</div>
<div class="t" style="top:59.05px;font-size:15px;line-height:18px;color:#000;transform:scaleX(0.8050);transform-origin:0 0;left:321.60px;">ASP.NE...</div>
<div class="t" style="top:59.05px;font-size:15px;line-height:18px;color:#000;transform:scaleX(0.8539);transform-origin:0 0;left:428.00px;">1310</div>
<div class="t" style="top:59.05px;font-size:15px;line-height:18px;color:#000;transform:scaleX(0.8799);transform-origin:0 0;left:472.00px;">Web Ev...</div>
<svg class="a" style="left:6px;top:81px" width="20" height="19" viewBox="0 0 20 19"><defs><linearGradient id="wgy" x1="0" y1="0" x2="0" y2="1"><stop offset="0" stop-color="#f7e63a"/><stop offset="0.6" stop-color="#f5df2c"/><stop offset="1" stop-color="#efc814"/></linearGradient></defs><path d="M10 1.5 Q10.8 1.5 11.4 2.6 L19.3 16.6 Q19.8 18 18.3 18 L1.7 18 Q0.2 18 0.8 16.6 L8.6 2.6 Q9.2 1.5 10 1.5Z" fill="url(#wgy)" stroke="#c9a400" stroke-width="1"/><rect x="8.9" y="6.5" width="2.4" height="5.8" fill="#000"/><rect x="8.9" y="13.5" width="2.4" height="2.5" fill="#000"/></svg>
<div class="t" style="top:82.80px;font-size:15px;line-height:18px;color:#000;transform:scaleX(0.9944);transform-origin:0 0;left:29.00px;">Warning</div>
<div class="t" style="top:82.80px;font-size:15px;line-height:18px;color:#000;transform:scaleX(0.8953);transform-origin:0 0;left:134.00px;">6/3/2022 5:19:29 PM</div>
<div class="t" style="top:82.80px;font-size:15px;line-height:18px;color:#000;transform:scaleX(0.8050);transform-origin:0 0;left:321.60px;">ASP.NE...</div>
<div class="t" style="top:82.80px;font-size:15px;line-height:18px;color:#000;transform:scaleX(0.8539);transform-origin:0 0;left:428.00px;">1310</div>
<div class="t" style="top:82.80px;font-size:15px;line-height:18px;color:#000;transform:scaleX(0.8799);transform-origin:0 0;left:472.00px;">Web Ev...</div>
<svg class="a" style="left:6px;top:105px" width="20" height="19" viewBox="0 0 20 19"><defs><linearGradient id="wgy" x1="0" y1="0" x2="0" y2="1"><stop offset="0" stop-color="#f7e63a"/><stop offset="0.6" stop-color="#f5df2c"/><stop offset="1" stop-color="#efc814"/></linearGradient></defs><path d="M10 1.5 Q10.8 1.5 11.4 2.6 L19.3 16.6 Q19.8 18 18.3 18 L1.7 18 Q0.2 18 0.8 16.6 L8.6 2.6 Q9.2 1.5 10 1.5Z" fill="url(#wgy)" stroke="#c9a400" stroke-width="1"/><rect x="8.9" y="6.5" width="2.4" height="5.8" fill="#000"/><rect x="8.9" y="13.5" width="2.4" height="2.5" fill="#000"/></svg>
<div class="t" style="top:106.55px;font-size:15px;line-height:18px;color:#000;transform:scaleX(0.9944);transform-origin:0 0;left:29.00px;">Warning</div>
<div class="t" style="top:106.55px;font-size:15px;line-height:18px;color:#000;transform:scaleX(0.8953);transform-origin:0 0;left:134.00px;">6/3/2022 5:18:56 PM</div>
<div class="t" style="top:106.55px;font-size:15px;line-height:18px;color:#000;transform:scaleX(0.8050);transform-origin:0 0;left:321.60px;">ASP.NE...</div>
<div class="t" style="top:106.55px;font-size:15px;line-height:18px;color:#000;transform:scaleX(0.8539);transform-origin:0 0;left:428.00px;">1310</div>
<div class="t" style="top:106.55px;font-size:15px;line-height:18px;color:#000;transform:scaleX(0.8799);transform-origin:0 0;left:472.00px;">Web Ev...</div>
<svg class="a" style="left:6px;top:128px" width="20" height="19" viewBox="0 0 20 19"><defs><linearGradient id="wgy" x1="0" y1="0" x2="0" y2="1"><stop offset="0" stop-color="#f7e63a"/><stop offset="0.6" stop-color="#f5df2c"/><stop offset="1" stop-color="#efc814"/></linearGradient></defs><path d="M10 1.5 Q10.8 1.5 11.4 2.6 L19.3 16.6 Q19.8 18 18.3 18 L1.7 18 Q0.2 18 0.8 16.6 L8.6 2.6 Q9.2 1.5 10 1.5Z" fill="url(#wgy)" stroke="#c9a400" stroke-width="1"/><rect x="8.9" y="6.5" width="2.4" height="5.8" fill="#000"/><rect x="8.9" y="13.5" width="2.4" height="2.5" fill="#000"/></svg>
<div class="t" style="top:130.30px;font-size:15px;line-height:18px;color:#000;transform:scaleX(0.9944);transform-origin:0 0;left:29.00px;">Warning</div>
<div class="t" style="top:130.30px;font-size:15px;line-height:18px;color:#000;transform:scaleX(0.8953);transform-origin:0 0;left:134.00px;">6/3/2022 5:18:23 PM</div>
<div class="t" style="top:130.30px;font-size:15px;line-height:18px;color:#000;transform:scaleX(0.8050);transform-origin:0 0;left:321.60px;">ASP.NE...</div>
<div class="t" style="top:130.30px;font-size:15px;line-height:18px;color:#000;transform:scaleX(0.8539);transform-origin:0 0;left:428.00px;">1310</div>
<div class="t" style="top:130.30px;font-size:15px;line-height:18px;color:#000;transform:scaleX(0.8799);transform-origin:0 0;left:472.00px;">Web Ev...</div>
<svg class="a" style="left:6px;top:152px" width="20" height="20" viewBox="0 0 20 20"><defs><radialGradient id="ig" cx="0.35" cy="0.35" r="0.8"><stop offset="0" stop-color="#fff"/><stop offset="1" stop-color="#d4d4d4"/></radialGradient></defs><circle cx="10" cy="10" r="8.8" fill="url(#ig)" stroke="#8c8c8c" stroke-width="1.8"/><rect x="8.6" y="3.6" width="3" height="2.6" rx="1" fill="#1c3fa8"/><rect x="8.6" y="7.6" width="3" height="9" fill="#2552c8"/></svg>
<div class="t" style="top:154.05px;font-size:15px;line-height:18px;color:#000;transform:scaleX(1.0260);transform-origin:0 0;left:29.00px;">Information</div>
<div class="t" style="top:154.05px;font-size:15px;line-height:18px;color:#000;transform:scaleX(0.8953);transform-origin:0 0;left:134.00px;">6/3/2022 5:18:03 PM</div>
<div class="t" style="top:154.05px;font-size:15px;line-height:18px;color:#000;transform:scaleX(0.9796);transform-origin:0 0;left:321.60px;">WMI</div>
<div class="t" style="top:154.05px;font-size:15px;line-height:18px;color:#000;transform:scaleX(0.8539);transform-origin:0 0;left:428.00px;">5617</div>
<div class="t" style="top:154.05px;font-size:15px;line-height:18px;color:#000;transform:scaleX(0.9900);transform-origin:0 0;left:472.00px;">None</div>
<svg class="a" style="left:6px;top:176px" width="20" height="19" viewBox="0 0 20 19"><defs><linearGradient id="wgy" x1="0" y1="0" x2="0" y2="1"><stop offset="0" stop-color="#f7e63a"/><stop offset="0.6" stop-color="#f5df2c"/><stop offset="1" stop-color="#efc814"/></linearGradient></defs><path d="M10 1.5 Q10.8 1.5 11.4 2.6 L19.3 16.6 Q19.8 18 18.3 18 L1.7 18 Q0.2 18 0.8 16.6 L8.6 2.6 Q9.2 1.5 10 1.5Z" fill="url(#wgy)" stroke="#c9a400" stroke-width="1"/><rect x="8.9" y="6.5" width="2.4" height="5.8" fill="#000"/><rect x="8.9" y="13.5" width="2.4" height="2.5" fill="#000"/></svg>
<div class="t" style="top:177.80px;font-size:15px;line-height:18px;color:#000;transform:scaleX(0.9944);transform-origin:0 0;left:29.00px;">Warning</div>
<div class="t" style="top:177.80px;font-size:15px;line-height:18px;color:#000;transform:scaleX(0.8953);transform-origin:0 0;left:134.00px;">6/3/2022 5:17:51 PM</div>
<div class="t" style="top:177.80px;font-size:15px;line-height:18px;color:#000;transform:scaleX(0.8050);transform-origin:0 0;left:321.60px;">ASP.NE...</div>
<div class="t" style="top:177.80px;font-size:15px;line-height:18px;color:#000;transform:scaleX(0.8539);transform-origin:0 0;left:428.00px;">1310</div>
<div class="t" style="top:177.80px;font-size:15px;line-height:18px;color:#000;transform:scaleX(0.8799);transform-origin:0 0;left:472.00px;">Web Ev...</div>
<svg class="a" style="left:6px;top:200px" width="20" height="19" viewBox="0 0 20 19"><defs><linearGradient id="wgy" x1="0" y1="0" x2="0" y2="1"><stop offset="0" stop-color="#f7e63a"/><stop offset="0.6" stop-color="#f5df2c"/><stop offset="1" stop-color="#efc814"/></linearGradient></defs><path d="M10 1.5 Q10.8 1.5 11.4 2.6 L19.3 16.6 Q19.8 18 18.3 18 L1.7 18 Q0.2 18 0.8 16.6 L8.6 2.6 Q9.2 1.5 10 1.5Z" fill="url(#wgy)" stroke="#c9a400" stroke-width="1"/><rect x="8.9" y="6.5" width="2.4" height="5.8" fill="#000"/><rect x="8.9" y="13.5" width="2.4" height="2.5" fill="#000"/></svg>
<div class="t" style="top:201.55px;font-size:15px;line-height:18px;color:#000;transform:scaleX(0.9944);transform-origin:0 0;left:29.00px;">Warning</div>
<div class="t" style="top:201.55px;font-size:15px;line-height:18px;color:#000;transform:scaleX(0.8953);transform-origin:0 0;left:134.00px;">6/3/2022 5:17:18 PM</div>
<div class="t" style="top:201.55px;font-size:15px;line-height:18px;color:#000;transform:scaleX(0.8050);transform-origin:0 0;left:321.60px;">ASP.NE...</div>
<div class="t" style="top:201.55px;font-size:15px;line-height:18px;color:#000;transform:scaleX(0.8539);transform-origin:0 0;left:428.00px;">1310</div>
<div class="t" style="top:201.55px;font-size:15px;line-height:18px;color:#000;transform:scaleX(0.8799);transform-origin:0 0;left:472.00px;">Web Ev...</div>
<svg class="a" style="left:6px;top:223px" width="20" height="20" viewBox="0 0 20 20"><defs><radialGradient id="ig" cx="0.35" cy="0.35" r="0.8"><stop offset="0" stop-color="#fff"/><stop offset="1" stop-color="#d4d4d4"/></radialGradient></defs><circle cx="10" cy="10" r="8.8" fill="url(#ig)" stroke="#8c8c8c" stroke-width="1.8"/><rect x="8.6" y="3.6" width="3" height="2.6" rx="1" fill="#1c3fa8"/><rect x="8.6" y="7.6" width="3" height="9" fill="#2552c8"/></svg>
<div class="t" style="top:225.30px;font-size:15px;line-height:18px;color:#000;transform:scaleX(1.0260);transform-origin:0 0;left:29.00px;">Information</div>
<div class="t" style="top:225.30px;font-size:15px;line-height:18px;color:#000;transform:scaleX(0.8953);transform-origin:0 0;left:134.00px;">6/3/2022 5:17:02 PM</div>
<div class="t" style="top:225.30px;font-size:15px;line-height:18px;color:#000;transform:scaleX(0.8475);transform-origin:0 0;left:321.60px;">MSDTC 2</div>
<div class="t" style="top:225.30px;font-size:15px;line-height:18px;color:#000;transform:scaleX(0.8539);transform-origin:0 0;left:428.00px;">4202</div>
<div class="t" style="top:225.30px;font-size:15px;line-height:18px;color:#000;transform:scaleX(0.9229);transform-origin:0 0;left:472.00px;">TM</div>
<svg class="a" style="left:6px;top:247px" width="20" height="19" viewBox="0 0 20 19"><defs><linearGradient id="wgy" x1="0" y1="0" x2="0" y2="1"><stop offset="0" stop-color="#f7e63a"/><stop offset="0.6" stop-color="#f5df2c"/><stop offset="1" stop-color="#efc814"/></linearGradient></defs><path d="M10 1.5 Q10.8 1.5 11.4 2.6 L19.3 16.6 Q19.8 18 18.3 18 L1.7 18 Q0.2 18 0.8 16.6 L8.6 2.6 Q9.2 1.5 10 1.5Z" fill="url(#wgy)" stroke="#c9a400" stroke-width="1"/><rect x="8.9" y="6.5" width="2.4" height="5.8" fill="#000"/><rect x="8.9" y="13.5" width="2.4" height="2.5" fill="#000"/></svg>
<div class="t" style="top:249.05px;font-size:15px;line-height:18px;color:#000;transform:scaleX(0.9944);transform-origin:0 0;left:29.00px;">Warning</div>
<div class="t" style="top:249.05px;font-size:15px;line-height:18px;color:#000;transform:scaleX(0.8953);transform-origin:0 0;left:134.00px;">6/3/2022 5:16:45 PM</div>
<div class="t" style="top:249.05px;font-size:15px;line-height:18px;color:#000;transform:scaleX(0.8050);transform-origin:0 0;left:321.60px;">ASP.NE...</div>
<div class="t" style="top:249.05px;font-size:15px;line-height:18px;color:#000;transform:scaleX(0.8539);transform-origin:0 0;left:428.00px;">1310</div>
<div class="t" style="top:249.05px;font-size:15px;line-height:18px;color:#000;transform:scaleX(0.8799);transform-origin:0 0;left:472.00px;">Web Ev...</div>
<svg class="a" style="left:6px;top:271px" width="20" height="19" viewBox="0 0 20 19"><defs><linearGradient id="wgy" x1="0" y1="0" x2="0" y2="1"><stop offset="0" stop-color="#f7e63a"/><stop offset="0.6" stop-color="#f5df2c"/><stop offset="1" stop-color="#efc814"/></linearGradient></defs><path d="M10 1.5 Q10.8 1.5 11.4 2.6 L19.3 16.6 Q19.8 18 18.3 18 L1.7 18 Q0.2 18 0.8 16.6 L8.6 2.6 Q9.2 1.5 10 1.5Z" fill="url(#wgy)" stroke="#c9a400" stroke-width="1"/><rect x="8.9" y="6.5" width="2.4" height="5.8" fill="#000"/><rect x="8.9" y="13.5" width="2.4" height="2.5" fill="#000"/></svg>
<div class="t" style="top:272.80px;font-size:15px;line-height:18px;color:#000;transform:scaleX(0.9944);transform-origin:0 0;left:29.00px;">Warning</div>
<div class="t" style="top:272.80px;font-size:15px;line-height:18px;color:#000;transform:scaleX(0.8953);transform-origin:0 0;left:134.00px;">6/3/2022 5:16:12 PM</div>
<div class="t" style="top:272.80px;font-size:15px;line-height:18px;color:#000;transform:scaleX(0.8050);transform-origin:0 0;left:321.60px;">ASP.NE...</div>
<div class="t" style="top:272.80px;font-size:15px;line-height:18px;color:#000;transform:scaleX(0.8539);transform-origin:0 0;left:428.00px;">1310</div>
<div class="t" style="top:272.80px;font-size:15px;line-height:18px;color:#000;transform:scaleX(0.8799);transform-origin:0 0;left:472.00px;">Web Ev...</div>
<svg class="a" style="left:6px;top:294px" width="20" height="20" viewBox="0 0 20 20"><defs><radialGradient id="ig" cx="0.35" cy="0.35" r="0.8"><stop offset="0" stop-color="#fff"/><stop offset="1" stop-color="#d4d4d4"/></radialGradient></defs><circle cx="10" cy="10" r="8.8" fill="url(#ig)" stroke="#8c8c8c" stroke-width="1.8"/><rect x="8.6" y="3.6" width="3" height="2.6" rx="1" fill="#1c3fa8"/><rect x="8.6" y="7.6" width="3" height="9" fill="#2552c8"/></svg>
<div class="t" style="top:296.55px;font-size:15px;line-height:18px;color:#000;transform:scaleX(1.0260);transform-origin:0 0;left:29.00px;">Information</div>
<div class="t" style="top:296.55px;font-size:15px;line-height:18px;color:#000;transform:scaleX(0.8953);transform-origin:0 0;left:134.00px;">6/3/2022 5:15:40 PM</div>
<div class="t" style="top:296.55px;font-size:15px;line-height:18px;color:#000;transform:scaleX(0.8303);transform-origin:0 0;left:321.60px;">CAPI2</div>
<div class="t" style="top:296.55px;font-size:15px;line-height:18px;color:#000;transform:scaleX(0.9147);transform-origin:0 0;left:428.00px;">4111</div>
<div class="t" style="top:296.55px;font-size:15px;line-height:18px;color:#000;transform:scaleX(0.9900);transform-origin:0 0;left:472.00px;">None</div>
<svg class="a" style="left:6px;top:318px" width="20" height="20" viewBox="0 0 20 20"><defs><radialGradient id="ig" cx="0.35" cy="0.35" r="0.8"><stop offset="0" stop-color="#fff"/><stop offset="1" stop-color="#d4d4d4"/></radialGradient></defs><circle cx="10" cy="10" r="8.8" fill="url(#ig)" stroke="#8c8c8c" stroke-width="1.8"/><rect x="8.6" y="3.6" width="3" height="2.6" rx="1" fill="#1c3fa8"/><rect x="8.6" y="7.6" width="3" height="9" fill="#2552c8"/></svg>
<div class="t" style="top:320.30px;font-size:15px;line-height:18px;color:#000;transform:scaleX(1.0260);transform-origin:0 0;left:29.00px;">Information</div>
<div class="t" style="top:320.30px;font-size:15px;line-height:18px;color:#000;transform:scaleX(0.8953);transform-origin:0 0;left:134.00px;">6/3/2022 5:15:40 PM</div>
<div class="t" style="top:320.30px;font-size:15px;line-height:18px;color:#000;transform:scaleX(0.8303);transform-origin:0 0;left:321.60px;">CAPI2</div>
<div class="t" style="top:320.30px;font-size:15px;line-height:18px;color:#000;transform:scaleX(0.8539);transform-origin:0 0;left:428.00px;">4108</div>
<div class="t" style="top:320.30px;font-size:15px;line-height:18px;color:#000;transform:scaleX(0.9900);transform-origin:0 0;left:472.00px;">None</div>
<svg class="a" style="left:6px;top:342px" width="20" height="20" viewBox="0 0 20 20"><defs><radialGradient id="ig" cx="0.35" cy="0.35" r="0.8"><stop offset="0" stop-color="#fff"/><stop offset="1" stop-color="#d4d4d4"/></radialGradient></defs><circle cx="10" cy="10" r="8.8" fill="url(#ig)" stroke="#8c8c8c" stroke-width="1.8"/><rect x="8.6" y="3.6" width="3" height="2.6" rx="1" fill="#1c3fa8"/><rect x="8.6" y="7.6" width="3" height="9" fill="#2552c8"/></svg>
<div class="t" style="top:344.05px;font-size:15px;line-height:18px;color:#000;transform:scaleX(1.0260);transform-origin:0 0;left:29.00px;">Information</div>
<div class="t" style="top:344.05px;font-size:15px;line-height:18px;color:#000;transform:scaleX(0.8953);transform-origin:0 0;left:134.00px;">6/3/2022 5:15:40 PM</div>
<div class="t" style="top:344.05px;font-size:15px;line-height:18px;color:#000;transform:scaleX(0.8303);transform-origin:0 0;left:321.60px;">CAPI2</div>
<div class="t" style="top:344.05px;font-size:15px;line-height:18px;color:#000;transform:scaleX(0.8539);transform-origin:0 0;left:428.00px;">4109</div>
<div class="t" style="top:344.05px;font-size:15px;line-height:18px;color:#000;transform:scaleX(0.9900);transform-origin:0 0;left:472.00px;">None</div>
<svg class="a" style="left:6px;top:366px" width="20" height="19" viewBox="0 0 20 19"><defs><linearGradient id="wgy" x1="0" y1="0" x2="0" y2="1"><stop offset="0" stop-color="#f7e63a"/><stop offset="0.6" stop-color="#f5df2c"/><stop offset="1" stop-color="#efc814"/></linearGradient></defs><path d="M10 1.5 Q10.8 1.5 11.4 2.6 L19.3 16.6 Q19.8 18 18.3 18 L1.7 18 Q0.2 18 0.8 16.6 L8.6 2.6 Q9.2 1.5 10 1.5Z" fill="url(#wgy)" stroke="#c9a400" stroke-width="1"/><rect x="8.9" y="6.5" width="2.4" height="5.8" fill="#000"/><rect x="8.9" y="13.5" width="2.4" height="2.5" fill="#000"/></svg>
<div class="t" style="top:367.80px;font-size:15px;line-height:18px;color:#000;transform:scaleX(0.9944);transform-origin:0 0;left:29.00px;">Warning</div>
<div class="t" style="top:367.80px;font-size:15px;line-height:18px;color:#000;transform:scaleX(0.8953);transform-origin:0 0;left:134.00px;">6/3/2022 5:15:39 PM</div>
<div class="t" style="top:367.80px;font-size:15px;line-height:18px;color:#000;transform:scaleX(0.8050);transform-origin:0 0;left:321.60px;">ASP.NE...</div>
<div class="t" style="top:367.80px;font-size:15px;line-height:18px;color:#000;transform:scaleX(0.8539);transform-origin:0 0;left:428.00px;">1310</div>
<div class="t" style="top:367.80px;font-size:15px;line-height:18px;color:#000;transform:scaleX(0.8799);transform-origin:0 0;left:472.00px;">Web Ev...</div>
</div>
<div class="a" style="left:1129px;top:140px;width:21px;height:372px;background:#f0f0f0;"></div>
<div class="a" style="left:1130px;top:162px;width:19px;height:43px;background:#cdcdcd;"></div>
<svg class="a" style="left:1134px;top:147px" width="10" height="10" viewBox="0 0 10 10"><path d="M1.0 7.0 L5.0 3.0 L9.0 7.0" fill="none" stroke="#606060" stroke-width="1.8"/></svg>
<svg class="a" style="left:1134px;top:495px" width="10" height="10" viewBox="0 0 10 10"><path d="M1.0 3.0 L5.0 7.0 L9.0 3.0" fill="none" stroke="#606060" stroke-width="1.8"/></svg>
<div class="a" style="left:251px;top:514px;width:902px;height:6px;background:#f0f0f0;"></div>
<div class="a" style="left:251px;top:514px;width:902px;height:2px;background:#fafafa;"></div>
<div class="a" style="left:251px;top:519px;width:904px;height:309px;background:#f0f0f0;"></div>
<div class="a" style="left:251px;top:521px;width:901px;height:306px;background:#f0f0f0;border-top:2px solid #707070;border-left:1px solid #a8a8a8"></div>
<div class="a" style="left:252px;top:521px;width:4px;height:306px;background:#7a7a7a;"></div>
<div class="a" style="left:1152px;top:520px;width:3px;height:308px;background:#fbfbfb;"></div>
<div class="a" style="left:251px;top:826px;width:904px;height:2px;background:#fbfbfb;"></div>
<div class="t" style="top:527.70px;font-size:15px;line-height:18px;color:#000;transform:scaleX(0.9091);transform-origin:0 0;left:263.60px;">Event 1310, ASP.NET 4.0.30319.0</div>
<svg class="a" style="left:1126px;top:530px" width="11" height="11" viewBox="0 0 11 11"><path d="M1 1 L10 10 M10 1 L1 10" stroke="#000" stroke-width="2.2"/></svg>
<div class="a" style="left:260px;top:549px;width:887px;height:3px;background:#a0a0a0;"></div>
<div class="a" style="left:335px;top:562px;width:57px;height:26px;background:#f3f3f3;border:1px solid #e3e3e3;border-bottom:none"></div>
<div class="a" style="left:267px;top:560px;width:69px;height:30px;background:#ffffff;"></div>
<div class="t" style="top:564.60px;font-size:15px;line-height:18px;color:#000;transform:scaleX(0.9237);transform-origin:0 0;left:276.20px;">General</div>
<div class="t" style="top:568.00px;font-size:15px;line-height:18px;color:#000;transform:scaleX(0.9289);transform-origin:0 0;left:341.70px;">Details</div>
<div class="a" style="left:267px;top:588px;width:873px;height:226px;background:#ffffff;"></div>
<div class="a" style="left:271px;top:589px;width:865px;height:221px;background:#f0f0f0;"></div>
<div class="a" style="left:1115px;top:589px;width:21px;height:221px;background:#f0f0f0;"></div>
<div class="a" style="left:1116px;top:611px;width:19px;height:139px;background:#cdcdcd;"></div>
<svg class="a" style="left:1120px;top:595px" width="10" height="10" viewBox="0 0 10 10"><path d="M1.0 7.0 L5.0 3.0 L9.0 7.0" fill="none" stroke="#606060" stroke-width="1.8"/></svg>
<svg class="a" style="left:1120px;top:793px" width="10" height="10" viewBox="0 0 10 10"><path d="M1.0 3.0 L5.0 7.0 L9.0 3.0" fill="none" stroke="#606060" stroke-width="1.8"/></svg>
<div class="a" style="left:285px;top:609px;width:792px;height:57px;background:#f0f0f0;border-top:2px solid #7a7a7a;border-left:2px solid #7a7a7a;border-right:1px solid #fff;border-bottom:1px solid #fff"></div>
<div class="a" style="left:287px;top:611px;width:765px;height:54px;overflow:hidden">
<div class="t" style="top:2.80px;font-size:15px;line-height:18px;color:#000;transform:scaleX(0.9378);transform-origin:0 0;left:2.00px;">Event code: 3008</div>
<div class="t" style="top:22.10px;font-size:15px;line-height:18px;color:#000;transform:scaleX(0.9812);transform-origin:0 0;left:2.00px;">Event message: A configuration error has occurred.</div>
<div class="t" style="top:41.10px;font-size:15px;line-height:18px;color:#000;transform:scaleX(0.9521);transform-origin:0 0;left:2.00px;">Event time: 6/3/2022 5:20:34 PM</div>
</div>
<div class="a" style="left:1053px;top:611px;width:1px;height:54px;background:#e8e8e8;"></div>
<div class="a" style="left:1075px;top:611px;width:1px;height:54px;background:#e4e4e4;"></div>
<svg class="a" style="left:1059px;top:617px" width="10" height="10" viewBox="0 0 10 10"><path d="M1.0 7.0 L5.0 3.0 L9.0 7.0" fill="none" stroke="#606060" stroke-width="1.8"/></svg>
<svg class="a" style="left:1059px;top:648px" width="10" height="10" viewBox="0 0 10 10"><path d="M1.0 3.0 L5.0 7.0 L9.0 3.0" fill="none" stroke="#606060" stroke-width="1.8"/></svg>
<div class="t" style="top:688.30px;font-size:15px;line-height:18px;color:#000;transform:scaleX(0.9676);transform-origin:0 0;left:282.90px;">Log Na<u>m</u>e:</div>
<div class="t" style="top:688.60px;font-size:15px;line-height:18px;color:#000;transform:scaleX(0.9906);transform-origin:0 0;left:416.50px;">Application</div>
<div class="t" style="top:713.60px;font-size:15px;line-height:18px;color:#000;transform:scaleX(0.9206);transform-origin:0 0;left:282.90px;"><u>S</u>ource:</div>
<div class="t" style="top:713.60px;font-size:15px;line-height:18px;color:#000;transform:scaleX(0.8474);transform-origin:0 0;left:416.50px;">ASP.NET 4.0.30319.0</div>
<div class="t" style="top:713.80px;font-size:15px;line-height:18px;color:#000;transform:scaleX(0.9588);transform-origin:0 0;left:614.00px;">Logge<u>d</u>:</div>
<div class="t" style="top:713.80px;font-size:15px;line-height:18px;color:#000;transform:scaleX(0.8975);transform-origin:0 0;left:721.50px;">6/3/2022 5:20:34 PM</div>
<div class="t" style="top:739.90px;font-size:15px;line-height:18px;color:#000;transform:scaleX(0.9141);transform-origin:0 0;left:282.90px;"><u>E</u>vent ID:</div>
<div class="t" style="top:739.90px;font-size:15px;line-height:18px;color:#000;transform:scaleX(0.8869);transform-origin:0 0;left:416.50px;">1310</div>
<div class="t" style="top:740.50px;font-size:15px;line-height:18px;color:#000;transform:scaleX(0.9396);transform-origin:0 0;left:614.00px;">Task Categor<u>y</u>:</div>
<div class="t" style="top:740.50px;font-size:15px;line-height:18px;color:#000;transform:scaleX(0.9506);transform-origin:0 0;left:721.50px;">Web Event</div>
<div class="t" style="top:765.50px;font-size:15px;line-height:18px;color:#000;transform:scaleX(0.9068);transform-origin:0 0;left:282.90px;"><u>L</u>evel:</div>
<div class="t" style="top:766.10px;font-size:15px;line-height:18px;color:#000;left:416.50px;">Warning</div>
<div class="t" style="top:766.90px;font-size:15px;line-height:18px;color:#000;transform:scaleX(0.9539);transform-origin:0 0;left:614.00px;"><u>K</u>eywords:</div>
<div class="t" style="top:766.90px;font-size:15px;line-height:18px;color:#000;transform:scaleX(0.8688);transform-origin:0 0;left:721.50px;">Classic</div>
<div class="t" style="top:792.40px;font-size:15px;line-height:18px;color:#000;transform:scaleX(0.8760);transform-origin:0 0;left:282.90px;"><u>U</u>ser:</div>
<div class="t" style="top:792.60px;font-size:15px;line-height:18px;color:#000;left:416.50px;">N/A</div>
<div class="t" style="top:792.60px;font-size:15px;line-height:18px;color:#000;transform:scaleX(1.0138);transform-origin:0 0;left:614.00px;">Compute<u>r</u>:</div>
<div class="t" style="top:792.60px;font-size:15px;line-height:18px;color:#000;transform:scaleX(0.9100);transform-origin:0 0;left:721.50px;">7383a82019f4</div>
<div class="a" style="left:1160px;top:105px;width:473px;height:723px;background:#ffffff;"></div>
<div class="a" style="left:1160px;top:105px;width:2px;height:723px;background:#767676;"></div>
<div class="a" style="left:1160px;top:104px;width:473px;height:4px;background:#7a7a7a;"></div>
<div class="a" style="left:1162px;top:108px;width:471px;height:1px;background:#ffffff;"></div>
<div class="a" style="left:1162px;top:108px;width:471px;height:24px;background:#f0f0f0;"></div>
<div class="a" style="left:1162px;top:132px;width:471px;height:1px;background:#b0b0b0;"></div>
<div class="a" style="left:1162px;top:133px;width:471px;height:1px;background:#ffffff;"></div>
<div class="t" style="top:112.70px;font-size:15px;line-height:18px;color:#000;font-weight:bold;transform:scaleX(0.9034);transform-origin:0 0;left:1169.20px;">Actions</div>
<div class="a" style="left:1162px;top:134px;width:471px;height:31px;background:linear-gradient(#bcd3ec,#9bb5d6);"></div>
<div class="t" style="top:142.50px;font-size:15px;line-height:18px;color:#000;transform:scaleX(0.8839);transform-origin:0 0;left:1171.40px;">20220603</div>
<svg class="a" style="left:1612px;top:146px" width="13" height="7" viewBox="0 0 13 7"><path d="M0 7 L6.5 0 L13 7Z" fill="#000"/></svg>
<svg class="a" style="left:1168px;top:173px" width="20" height="18" viewBox="0 0 20 18"><rect x="13" y="0.5" width="5" height="1.2" fill="#3ad23a"/><path d="M1 5 L7 5 L8 3.5 L14 3.5 L14 14.5 L1 14.5Z" fill="#efd08a" stroke="#c9a24e" stroke-width="0.9"/><path d="M0.5 16.5 L3 8 L18 8 L15.5 16.5Z" fill="#f7e0a6" stroke="#c9a24e" stroke-width="0.9"/><rect x="9" y="4.2" width="3" height="1.6" fill="#5aa0e8"/></svg>
<div class="t" style="top:173.20px;font-size:15px;line-height:18px;color:#000;transform:scaleX(0.9089);transform-origin:0 0;left:1201.20px;">Open Saved Log...</div>
<svg class="a" style="left:1170px;top:202px" width="20" height="18" viewBox="0 0 20 18"><path d="M0.5 0.5 L19 0.5 L12 9 L12 16.5 L8.5 17.5 L8.5 9Z" fill="#8aa3b8" stroke="#5d7489" stroke-width="0.8"/><path d="M0.5 0.5 L10 0.5 L10 6 L7 9 Q3 5 0.5 0.5Z" fill="#f5a623"/><circle cx="6" cy="3.5" r="2.5" fill="#ffd23a"/></svg>
<div class="t" style="top:203.00px;font-size:15px;line-height:18px;color:#000;transform:scaleX(0.9171);transform-origin:0 0;left:1201.20px;">Create Custom View...</div>
<div class="t" style="top:232.80px;font-size:15px;line-height:18px;color:#000;transform:scaleX(0.9477);transform-origin:0 0;left:1201.20px;">Import Custom View...</div>
<div class="a" style="left:1169px;top:255px;width:457px;height:1px;background:#e6e6e6;"></div>
<svg class="a" style="left:1170px;top:261px" width="20" height="18" viewBox="0 0 20 18"><path d="M0.5 0.5 L19 0.5 L12 9 L12 16.5 L8.5 17.5 L8.5 9Z" fill="#8aa3b8" stroke="#5d7489" stroke-width="0.8"/><path d="M2 1.5 L17 1.5 L15 3.5 L4 3.5Z" fill="#c3d3e0"/></svg>
<div class="t" style="top:265.30px;font-size:15px;line-height:18px;color:#000;transform:scaleX(0.9287);transform-origin:0 0;left:1201.20px;">Filter Current Log...</div>
<svg class="a" style="left:1169px;top:292px" width="19" height="19" viewBox="0 0 19 19"><rect x="0.5" y="0.5" width="18" height="18" rx="1" fill="#e9e9e9" stroke="#8f8f8f" stroke-width="1"/><rect x="2.5" y="2.5" width="14" height="13" fill="#f8f8f8" stroke="#a8a8b8" stroke-width="0.8"/><rect x="2.5" y="2.5" width="14" height="2.5" fill="#d8dce8"/><rect x="9" y="3.2" width="2" height="1.2" fill="#9aa"/><rect x="12" y="3.2" width="2" height="1.2" fill="#9aa"/><rect x="6.5" y="7.5" width="8" height="1" fill="#8a97b8"/><rect x="6.5" y="10" width="8" height="1" fill="#8a97b8"/><rect x="6.5" y="12.5" width="8" height="1" fill="#8a97b8"/><rect x="4" y="7.3" width="1.5" height="1.5" fill="#1f9ef0"/><rect x="4" y="10" width="1.2" height="1.2" fill="#888"/><rect x="6.5" y="16" width="6" height="2" fill="#1fb0f0"/></svg>
<div class="t" style="top:295.30px;font-size:15px;line-height:18px;color:#000;transform:scaleX(0.9433);transform-origin:0 0;left:1201.20px;">Properties</div>
<svg class="a" style="left:1169px;top:321px" width="21" height="21" viewBox="0 0 21 21"><path d="M1.5 6 Q1.5 2 4.5 1.5 L7 1.5 Q8.5 2 8.5 5 L8.5 14 L1.5 14Z" fill="#c9cdd1" stroke="#3e4852" stroke-width="1.3"/><path d="M12.5 5 Q12.5 2 14 1.5 L16.5 1.5 Q19.5 2 19.5 6 L19.5 14 L12.5 14Z" fill="#c9cdd1" stroke="#3e4852" stroke-width="1.3"/><rect x="8" y="4" width="5" height="7" fill="#8a9299" stroke="#3e4852" stroke-width="1"/><rect x="3.5" y="4" width="2.5" height="8" fill="#eef0f2"/><rect x="14.5" y="4" width="2.5" height="8" fill="#eef0f2"/><path d="M1 14.5 L9 14.5 L9 19 Q5 20.5 1 19Z" fill="#3a96e8" stroke="#333" stroke-dasharray="1.2 1" stroke-width="0.9"/><path d="M12 14.5 L20 14.5 L20 19 Q16 20.5 12 19Z" fill="#3a96e8" stroke="#333" stroke-dasharray="1.2 1" stroke-width="0.9"/></svg>
<div class="t" style="top:324.60px;font-size:15px;line-height:18px;color:#000;transform:scaleX(0.8876);transform-origin:0 0;left:1201.20px;">Find...</div>
<svg class="a" style="left:1169px;top:351px" width="20" height="20" viewBox="0 0 20 20"><path d="M0.5 1.5 Q0.5 0.5 1.5 0.5 L18.5 0.5 Q19.5 0.5 19.5 1.5 L19.5 18.5 Q19.5 19.5 18.5 19.5 L1.5 19.5 Q0.5 19.5 0.5 18.5Z" fill="#3c3c3c"/><rect x="4" y="1" width="12" height="10" fill="#f4f4f4"/><rect x="4.5" y="13" width="11" height="6.5" fill="#c8c8c8"/><rect x="4.5" y="13" width="2" height="6.5" fill="#eee"/><rect x="6.5" y="14" width="2.5" height="4" fill="#2a2a2a"/><rect x="1.5" y="2.5" width="1.5" height="1.5" fill="#ddd"/><rect x="17" y="2.5" width="1.5" height="1.5" fill="#bbb"/></svg>
<div class="t" style="top:354.60px;font-size:15px;line-height:18px;color:#000;transform:scaleX(0.8940);transform-origin:0 0;left:1201.20px;">Save All Events As...</div>
<div class="a" style="left:1169px;top:376px;width:457px;height:1px;background:#e6e6e6;"></div>
<div class="t" style="top:385.60px;font-size:15px;line-height:18px;color:#000;transform:scaleX(0.9302);transform-origin:0 0;left:1201.20px;">View</div>
<svg class="a" style="left:1616px;top:387px" width="7" height="12" viewBox="0 0 7 12"><path d="M0 0 L6.5 6 L0 12Z" fill="#000"/></svg>
<div class="a" style="left:1169px;top:408px;width:457px;height:1px;background:#e6e6e6;"></div>
<svg class="a" style="left:1168px;top:414px" width="20" height="19" viewBox="0 0 20 19"><path d="M2 2 L18 17 M18 2 L2 17" stroke="#e0181e" stroke-width="4.2" stroke-linecap="round"/><path d="M2.5 2.2 L9 8.3" stroke="#f46a6a" stroke-width="1.2"/></svg>
<div class="t" style="top:417.60px;font-size:15px;line-height:18px;color:#000;transform:scaleX(0.9617);transform-origin:0 0;left:1201.20px;">Delete</div>
<svg class="a" style="left:1169px;top:445px" width="21" height="18" viewBox="0 0 21 18"><rect x="0.5" y="4.5" width="17" height="9" fill="#dfe6f5" stroke="#8f9bc0" stroke-width="1"/><rect x="2" y="6" width="11" height="6" fill="#1a7ff0"/><path d="M13 0.5 L18 0.5 M15.5 0.5 L15.5 17.5 M13 17.5 L18 17.5" stroke="#555" stroke-width="1.1" fill="none"/></svg>
<div class="t" style="top:446.80px;font-size:15px;line-height:18px;color:#000;transform:scaleX(0.9347);transform-origin:0 0;left:1201.20px;">Rename</div>
<svg class="a" style="left:1171px;top:474px" width="17" height="21" viewBox="0 0 17 21"><path d="M0.5 0.5 L11 0.5 L16.5 6 L16.5 20.5 L0.5 20.5Z" fill="#fafafa" stroke="#a9a9a9" stroke-width="1"/><path d="M11 0.5 L11 6 L16.5 6" fill="#e8e8e8" stroke="#a9a9a9" stroke-width="0.8"/><path d="M12 12.5 A4.2 4.2 0 1 1 9.5 8.6" fill="none" stroke="#39b54a" stroke-width="2.2"/><path d="M9 5.8 L12.6 8.8 L8.8 10.6Z" fill="#39b54a"/><path d="M12.5 15 L13.5 11 L10.5 13Z" fill="#39b54a"/></svg>
<div class="t" style="top:477.10px;font-size:15px;line-height:18px;color:#000;transform:scaleX(0.9137);transform-origin:0 0;left:1201.20px;">Refresh</div>
<div class="a" style="left:1169px;top:500px;width:457px;height:1px;background:#e6e6e6;"></div>
<svg class="a" style="left:1170px;top:506px" width="16" height="20" viewBox="0 0 16 20"><rect x="0" y="0" width="16" height="20" fill="#2b46a8"/><rect x="1.5" y="1.5" width="13" height="17" fill="#5274d8"/><text x="8" y="16" font-family="Liberation Sans" font-size="16" font-weight="bold" fill="#fff" text-anchor="middle">?</text></svg>
<div class="t" style="top:508.80px;font-size:15px;line-height:18px;color:#000;transform:scaleX(0.9592);transform-origin:0 0;left:1201.20px;">Help</div>
<svg class="a" style="left:1616px;top:510px" width="7" height="12" viewBox="0 0 7 12"><path d="M0 0 L6.5 6 L0 12Z" fill="#000"/></svg>
<div class="a" style="left:1162px;top:537px;width:471px;height:31px;background:linear-gradient(#bcd3ec,#9bb5d6);"></div>
<div class="t" style="top:545.80px;font-size:15px;line-height:18px;color:#000;transform:scaleX(0.8741);transform-origin:0 0;left:1171.40px;">Event 1310, ASP.NET 4.0.30319.0</div>
<svg class="a" style="left:1612px;top:549px" width="13" height="7" viewBox="0 0 13 7"><path d="M0 7 L6.5 0 L13 7Z" fill="#000"/></svg>
<svg class="a" style="left:1169px;top:572px" width="19" height="19" viewBox="0 0 19 19"><rect x="0.5" y="0.5" width="18" height="18" rx="1" fill="#e9e9e9" stroke="#8f8f8f" stroke-width="1"/><rect x="2.5" y="2.5" width="14" height="13" fill="#f8f8f8" stroke="#a8a8b8" stroke-width="0.8"/><rect x="2.5" y="2.5" width="14" height="2.5" fill="#d8dce8"/><rect x="9" y="3.2" width="2" height="1.2" fill="#9aa"/><rect x="12" y="3.2" width="2" height="1.2" fill="#9aa"/><rect x="6.5" y="7.5" width="8" height="1" fill="#8a97b8"/><rect x="6.5" y="10" width="8" height="1" fill="#8a97b8"/><rect x="6.5" y="12.5" width="8" height="1" fill="#8a97b8"/><rect x="4" y="7.3" width="1.5" height="1.5" fill="#1f9ef0"/><rect x="4" y="10" width="1.2" height="1.2" fill="#888"/><rect x="6.5" y="16" width="6" height="2" fill="#1fb0f0"/></svg>
<div class="t" style="top:575.80px;font-size:15px;line-height:18px;color:#000;transform:scaleX(0.9433);transform-origin:0 0;left:1201.20px;">Event Properties</div>
<svg class="a" style="left:1169px;top:602px" width="20" height="20" viewBox="0 0 20 20"><path d="M0.5 0.5 L8 0.5 L10.5 3 L10.5 13.5 L0.5 13.5Z" fill="#fff" stroke="#9a9a9a" stroke-width="1"/><rect x="2" y="4" width="5" height="1" fill="#4a8ad8"/><rect x="2" y="7" width="6" height="1" fill="#4a8ad8"/><path d="M6.5 6.5 L15 6.5 L18.5 10 L18.5 19.5 L6.5 19.5Z" fill="#fff" stroke="#9a9a9a" stroke-width="1"/><rect x="9" y="11" width="7" height="1" fill="#4a8ad8"/><rect x="9" y="14" width="7" height="1" fill="#4a8ad8"/><rect x="9" y="17" width="6" height="1" fill="#4a8ad8"/></svg>
<div class="t" style="top:606.10px;font-size:15px;line-height:18px;color:#000;transform:scaleX(0.9706);transform-origin:0 0;left:1201.20px;">Copy</div>
<svg class="a" style="left:1616px;top:608px" width="7" height="12" viewBox="0 0 7 12"><path d="M0 0 L6.5 6 L0 12Z" fill="#000"/></svg>
<svg class="a" style="left:1169px;top:633px" width="20" height="20" viewBox="0 0 20 20"><path d="M0.5 1.5 Q0.5 0.5 1.5 0.5 L18.5 0.5 Q19.5 0.5 19.5 1.5 L19.5 18.5 Q19.5 19.5 18.5 19.5 L1.5 19.5 Q0.5 19.5 0.5 18.5Z" fill="#3c3c3c"/><rect x="4" y="1" width="12" height="10" fill="#f4f4f4"/><rect x="4.5" y="13" width="11" height="6.5" fill="#c8c8c8"/><rect x="4.5" y="13" width="2" height="6.5" fill="#eee"/><rect x="6.5" y="14" width="2.5" height="4" fill="#2a2a2a"/><rect x="1.5" y="2.5" width="1.5" height="1.5" fill="#ddd"/><rect x="17" y="2.5" width="1.5" height="1.5" fill="#bbb"/></svg>
<div class="t" style="top:636.30px;font-size:15px;line-height:18px;color:#000;transform:scaleX(0.8885);transform-origin:0 0;left:1201.20px;">Save Selected Events...</div>
<div class="a" style="left:1169px;top:657px;width:457px;height:1px;background:#e6e6e6;"></div>
<svg class="a" style="left:1171px;top:663px" width="17" height="21" viewBox="0 0 17 21"><path d="M0.5 0.5 L11 0.5 L16.5 6 L16.5 20.5 L0.5 20.5Z" fill="#fafafa" stroke="#a9a9a9" stroke-width="1"/><path d="M11 0.5 L11 6 L16.5 6" fill="#e8e8e8" stroke="#a9a9a9" stroke-width="0.8"/><path d="M12 12.5 A4.2 4.2 0 1 1 9.5 8.6" fill="none" stroke="#39b54a" stroke-width="2.2"/><path d="M9 5.8 L12.6 8.8 L8.8 10.6Z" fill="#39b54a"/><path d="M12.5 15 L13.5 11 L10.5 13Z" fill="#39b54a"/></svg>
<div class="t" style="top:666.80px;font-size:15px;line-height:18px;color:#000;transform:scaleX(0.9137);transform-origin:0 0;left:1201.20px;">Refresh</div>
<div class="a" style="left:1169px;top:689px;width:457px;height:1px;background:#e6e6e6;"></div>
<svg class="a" style="left:1170px;top:695px" width="16" height="20" viewBox="0 0 16 20"><rect x="0" y="0" width="16" height="20" fill="#2b46a8"/><rect x="1.5" y="1.5" width="13" height="17" fill="#5274d8"/><text x="8" y="16" font-family="Liberation Sans" font-size="16" font-weight="bold" fill="#fff" text-anchor="middle">?</text></svg>
<div class="t" style="top:697.90px;font-size:15px;line-height:18px;color:#000;transform:scaleX(0.9592);transform-origin:0 0;left:1201.20px;">Help</div>
<svg class="a" style="left:1616px;top:699px" width="7" height="12" viewBox="0 0 7 12"><path d="M0 0 L6.5 6 L0 12Z" fill="#000"/></svg>
</body></html>
